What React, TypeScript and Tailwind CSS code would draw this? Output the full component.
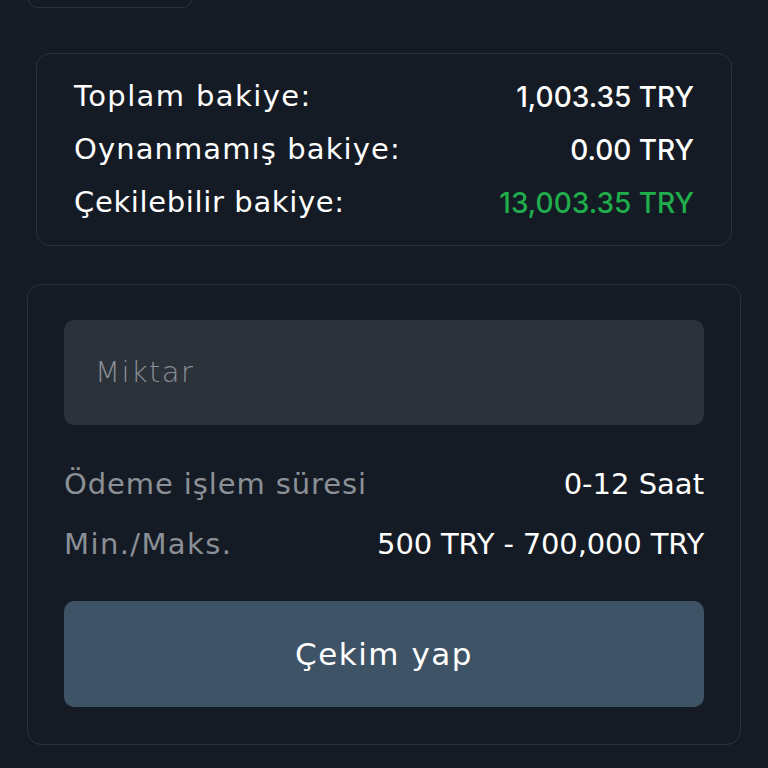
import React from "react";

const dv = { fontFamily: '"DejaVu Sans", "Noto Sans", sans-serif' };
const it = { fontFamily: '"Inter", "Noto Sans", sans-serif' };

export default function App() {
  return (
    <div className="w-[768px] h-[768px] overflow-hidden bg-[#151b24] text-white" style={dv}>
      <div className="ml-[28px] w-[164px] h-[9px] -mt-[1px] rounded-b-[10px] border border-t-0 border-[#2b323c]" />
      <div className="mx-[36px] mt-[45px] h-[193px] rounded-[14px] border border-[#2a313b] px-[37px] pt-[16px] flex flex-col">
        {[
          ["Toplam bakiye:", "1,003.35 TRY", "text-white", "tracking-[1.4px]"],
          ["Oynanmamış bakiye:", "0.00 TRY", "text-white", "tracking-[1.1px]"],
          ["Çekilebilir bakiye:", "13,003.35 TRY", "text-[#1fae4b]", "tracking-[0.65px]"],
        ].map(([l, v, c, t]) => (
          <div key={l} className="flex justify-between items-center h-[53px]">
            <span className={"text-[29px] " + t}>{l}</span>
            <span className={c + " text-[28px] font-medium"} style={it}>{v}</span>
          </div>
        ))}
      </div>
      <div className="mx-[27px] mt-[38px] h-[461px] rounded-[14px] border border-[#2a313b] px-[36px] pt-[35px] flex flex-col">
        <div className="h-[105px] rounded-[10px] bg-[#2c323a] flex items-center px-[31px]">
          <span className="text-[29px] font-extralight tracking-[1.4px] text-[#8a8f96]">Miktar</span>
        </div>
        <div className="mt-[30px] flex justify-between items-center h-[60px] text-[29px]">
          <span className="text-[#8b9096] tracking-[0.9px]">Ödeme işlem süresi</span>
          <span>0-12 Saat</span>
        </div>
        <div className="flex justify-between items-center h-[59px] text-[29px]">
          <span className="text-[#8b9096] tracking-[1.4px]">Min./Maks.</span>
          <span className="tracking-[-0.15px]">500 TRY - 700,000 TRY</span>
        </div>
        <div className="mt-[27px] h-[106px] rounded-[10px] bg-[#3e5366] flex items-center justify-center text-[31px] tracking-[1.5px]">
          Çekim yap
        </div>
      </div>
    </div>
  );
}
